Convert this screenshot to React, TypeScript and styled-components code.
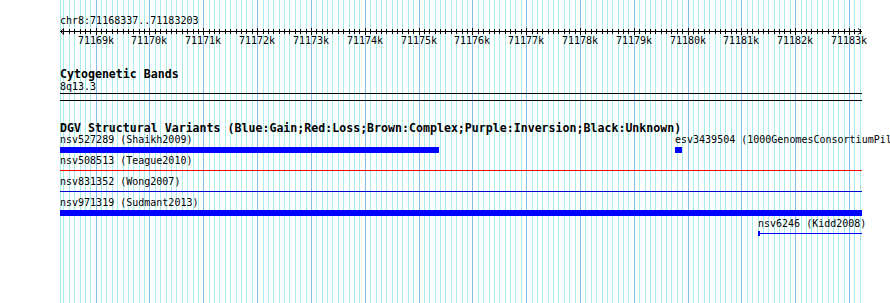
import React from "react";
import styled, { createGlobalStyle } from "styled-components";

const START = 71168337;
const END = 71183203;
const TRACK_W = 802;
const SCALE = 800 / (END - START);
const bx = (bp: number) => (bp - START) * SCALE;

const GlobalStyle = createGlobalStyle`
  html, body { margin: 0; padding: 0; background: #ffffff; }
  body { font-family: "DejaVu Sans Mono", "Liberation Mono", monospace; color: #000; }
`;

const Page = styled.div`
  position: relative;
  width: 890px;
  height: 303px;
  overflow: hidden;
  background: #ffffff;
`;

const GridSvg = styled.svg`
  position: absolute;
  left: 60px;
  top: 0;
  width: ${TRACK_W}px;
  height: 303px;
`;

const Content = styled.div`
  position: relative;
  display: flex;
  flex-direction: column;
  margin-left: 60px;
  width: ${TRACK_W}px;
`;

const PosLabel = styled.div`
  margin-top: 15px;
  height: 12px;
  font-size: 10px;
  line-height: 12px;
  white-space: nowrap;
`;

const RulerSvg = styled.svg`
  display: block;
  width: ${TRACK_W + 2}px;
  height: 9px;
  margin-left: -1px;
`;

const TickLabels = styled.div`
  position: relative;
  height: 10px;
`;

const TickLabel = styled.span`
  position: absolute;
  top: 0;
  font-size: 10px;
  line-height: 10px;
  transform: translateX(-50%);
  white-space: nowrap;
`;

const TrackTitle = styled.div<{ $gap: number; $h: number }>`
  margin-top: ${(p) => p.$gap}px;
  height: ${(p) => p.$h}px;
  font-size: 11.6px;
  font-weight: bold;
  line-height: 13px;
  white-space: nowrap;
`;

const BandLabel = styled.div`
  margin-top: 1px;
  height: 10px;
  font-size: 10px;
  line-height: 10px;
`;

const Rule = styled.div<{ $gap: number }>`
  margin-top: ${(p) => p.$gap}px;
  height: 1px;
  background: #000;
`;

const FeatureRow = styled.div`
  position: relative;
  height: 21px;
`;

const Feature = styled.div`
  position: absolute;
  top: 0;
  display: flex;
  flex-direction: column;
`;

const FeatureLabel = styled.div`
  height: 11px;
  font-size: 10px;
  line-height: 11px;
  white-space: nowrap;
`;

const GlyphArea = styled.div`
  position: relative;
  height: 9px;
  margin-top: 2px;
  display: flex;
  align-items: flex-start;
`;

const Bar = styled.div<{ $color: string }>`
  width: 100%;
  height: 6px;
  background: ${(p) => p.$color};
`;

const Line = styled.div<{ $color: string; $cap?: boolean }>`
  position: relative;
  width: 100%;
  height: 1px;
  margin-top: 2px;
  background: ${(p) => p.$color};
  &::before {
    content: "";
    display: ${(p) => (p.$cap ? "block" : "none")};
    position: absolute;
    left: 0;
    top: -2px;
    width: 2px;
    height: 5px;
    background: ${(p) => p.$color};
  }
`;

type Glyph = "bar" | "line" | "capline";
type Feat = { label: string; x: number; w: number; glyph: Glyph; color: string };

const rows: Feat[][] = [
  [
    { label: "nsv527289 (Shaikh2009)", x: 0, w: 379, glyph: "bar", color: "#0000ff" },
    { label: "esv3439504 (1000GenomesConsortiumPilot)", x: 615, w: 7, glyph: "bar", color: "#0000ff" },
  ],
  [{ label: "nsv508513 (Teague2010)", x: 0, w: 802, glyph: "line", color: "#ff0000" }],
  [{ label: "nsv831352 (Wong2007)", x: 0, w: 802, glyph: "line", color: "#0000cc" }],
  [{ label: "nsv971319 (Sudmant2013)", x: 0, w: 802, glyph: "bar", color: "#0000ff" }],
  [{ label: "nsv6246 (Kidd2008)", x: 698, w: 104, glyph: "capline", color: "#0000ff" }],
];

const minorTicks: number[] = [];
for (let bp = Math.ceil(START / 100) * 100; bp <= END; bp += 100) minorTicks.push(bp);
const majorTicks = minorTicks.filter((bp) => bp % 1000 === 0);

const Grid = () => (
  <GridSvg viewBox={`0 0 ${TRACK_W} 303`}>
    <line x1={0.5} x2={0.5} y1={0} y2={303} stroke="#a6eeee" strokeWidth={1} />
    {minorTicks.map((bp) => {
      const x = Math.round(bx(bp)) + 0.5;
      const major = bp % 1000 === 0;
      return (
        <line
          key={bp}
          x1={x}
          x2={x}
          y1={0}
          y2={303}
          stroke={major ? "#80bfee" : "#a6eeee"}
          strokeWidth={1}
        />
      );
    })}
  </GridSvg>
);

const Ruler = () => (
  <RulerSvg viewBox={`0 0 ${TRACK_W + 2} 9`}>
    <line x1={1} x2={TRACK_W + 1} y1={4.5} y2={4.5} stroke="#000" strokeWidth={1} />
    <polyline points="5,1.5 1.5,4.5 5,7.5" fill="none" stroke="#000" strokeWidth={1} />
    <polyline points={`${TRACK_W - 3},1.5 ${TRACK_W + 0.5},4.5 ${TRACK_W - 3},7.5`} fill="none" stroke="#000" strokeWidth={1} />
    {minorTicks.map((bp) => {
      const x = Math.round(bx(bp)) + 1.5;
      const major = bp % 1000 === 0;
      return (
        <line key={bp} x1={x} x2={x} y1={major ? 1 : 2} y2={major ? 8 : 7} stroke="#000" strokeWidth={1} />
      );
    })}
  </RulerSvg>
);

const renderGlyph = (f: Feat) => {
  if (f.glyph === "bar") return <Bar $color={f.color} />;
  return <Line $color={f.color} $cap={f.glyph === "capline"} />;
};

export default function App() {
  return (
    <>
      <GlobalStyle />
      <Page>
        <Grid />
        <Content>
          <PosLabel>chr8:71168337..71183203</PosLabel>
          <Ruler />
          <TickLabels>
            {majorTicks.map((bp) => (
              <TickLabel key={bp} style={{ left: Math.round(bx(bp)) }}>
                {bp / 1000}k
              </TickLabel>
            ))}
          </TickLabels>
          <TrackTitle $gap={22} $h={13}>Cytogenetic Bands</TrackTitle>
          <BandLabel>8q13.3</BandLabel>
          <Rule $gap={1} />
          <Rule $gap={6} />
          <TrackTitle $gap={21} $h={12}>
            DGV Structural Variants (Blue:Gain;Red:Loss;Brown:Complex;Purple:Inversion;Black:Unknown)
          </TrackTitle>
          {rows.map((row, i) => (
            <FeatureRow key={i}>
              {row.map((f) => (
                <Feature key={f.label} style={{ left: f.x, width: f.w }}>
                  <FeatureLabel>{f.label}</FeatureLabel>
                  <GlyphArea>{renderGlyph(f)}</GlyphArea>
                </Feature>
              ))}
            </FeatureRow>
          ))}
        </Content>
      </Page>
    </>
  );
}
